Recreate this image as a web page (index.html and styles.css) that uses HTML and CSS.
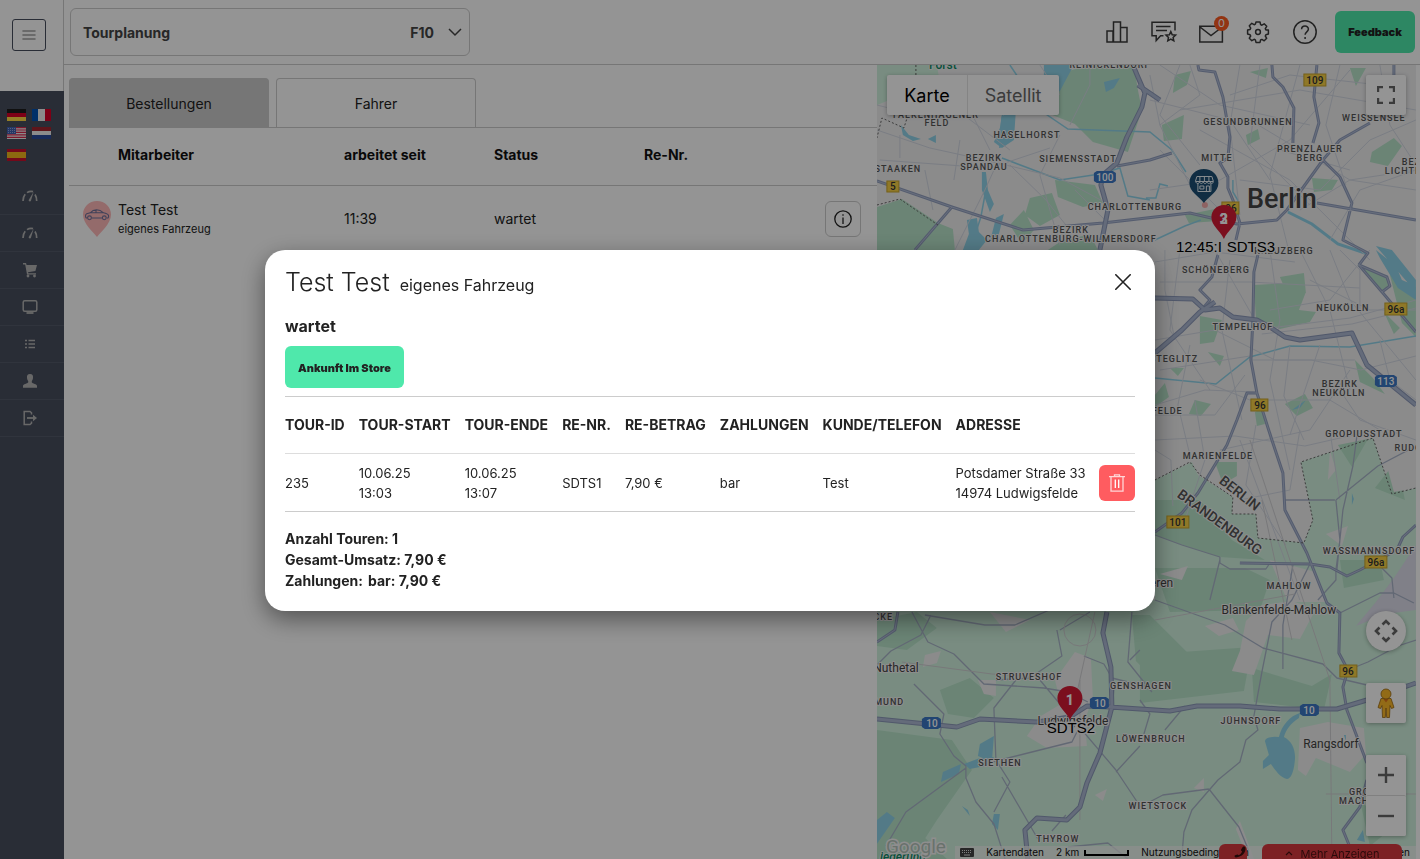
FILE: index.html
```html
<!DOCTYPE html>
<html lang="de">
<head>
<meta charset="utf-8">
<title>Tourplanung</title>
<link rel="stylesheet" href="styles.css">
</head>
<body>
<div class="app">
  <aside class="sidebar">
    <div class="sidebar-top">
      <button class="burger" type="button" aria-label="Menü">
        <svg width="14" height="10" viewBox="0 0 14 10" stroke="#a0a0a0" stroke-width="1.6" stroke-linecap="round"><path d="M1 1h12M1 5h12M1 9h12"/></svg>
      </button>
    </div>
    <div class="flags">
      <svg class="flag" viewBox="0 0 19 12"><path fill="#1d1d1d" d="M0 0h19v4H0z"/><path fill="#d80027" d="M0 4h19v4H0z"/><path fill="#ffda44" d="M0 8h19v4H0z"/></svg>
      <svg class="flag" viewBox="0 0 19 12"><path fill="#0052b4" d="M0 0h7v12H0z"/><path fill="#f0f0f0" d="M6 0h7v12H6z"/><path fill="#d80027" d="M13 0h6v12h-6z"/></svg>
      <svg class="flag" viewBox="0 0 19 12"><path fill="#f0f0f0" d="M0 0h19v12H0z"/><path stroke="#d8274d" stroke-width="1.2" d="M0 .6h19M0 3h19M0 5.4h19M0 7.8h19M0 10.4h19"/><path fill="#3f5fb0" d="M0 0h9v7H0z"/><path stroke="#a9b8e0" stroke-width=".8" stroke-dasharray="1 1" d="M1 1.5h7M1 3.5h7M1 5.5h7"/></svg>
      <svg class="flag" viewBox="0 0 19 12"><path fill="#a2252f" d="M0 0h19v4H0z"/><path fill="#f0f0f0" d="M0 4h19v4H0z"/><path fill="#2a4b9b" d="M0 8h19v4H0z"/></svg>
      <svg class="flag last" viewBox="0 0 19 12"><path fill="#c8102e" d="M0 0h19v12H0z"/><path fill="#f2b61c" d="M0 3h19v6H0z"/></svg>
    </div>
    <nav class="side-nav" aria-label="Hauptmenü">
      <a href="#" aria-label="Dashboard"><svg viewBox="0 0 16 16" fill="none" stroke="currentColor"><path stroke-width="1.7" d="M1 13c0-3 .8-5.200 2.200-6.800M5 4.600C7 3.300 9 3 11 3.600M13 6.500c1 1.500 1.700 3.500 1.700 6.500"/><path fill="currentColor" stroke="none" d="M11.800 3.500 9 12.600c-.5 1.400-2.600.9-2.300-.6z"/></svg></a>
      <a href="#" aria-label="Statistik"><svg viewBox="0 0 16 16" fill="none" stroke="currentColor"><path stroke-width="1.700" d="M1 13c0-3 .8-5.200 2.200-6.800M5 4.600C7 3.300 9 3 11 3.600M13 6.500c1 1.500 1.700 3.500 1.700 6.500"/><path fill="currentColor" stroke="none" d="M11.800 3.500 9 12.600c-.5 1.400-2.600.9-2.300-.6z"/></svg></a>
      <a href="#" aria-label="Bestellungen"><svg viewBox="0 0 16 16" fill="currentColor"><path d="M1 1h3l.6 2H15l-1.600 6-7.400 1.200.3 1H14v1.300H5L3.200 2.400H1z"/><circle cx="6" cy="14" r="1.400"/><circle cx="12.500" cy="14" r="1.400"/></svg></a>
      <a href="#" aria-label="Kasse"><svg viewBox="0 0 16 16" fill="none" stroke="currentColor" stroke-width="1.500"><rect x="1.200" y="1.800" width="13.600" height="10.500" rx="1.500"/><path stroke-width="1.800" d="M4.500 14h7"/></svg></a>
      <a href="#" aria-label="Listen"><svg viewBox="0 0 16 16" stroke="currentColor" stroke-width="1.500"><path d="M3 4.500h2M3 8h2M3 11.500h2M6.500 4.500H13M6.500 8H13M6.500 11.500H13"/></svg></a>
      <a href="#" aria-label="Kunden"><svg viewBox="0 0 16 16" fill="currentColor"><path d="M8 1c2.400 0 3.300 1.700 3 3.900-.2 1.700-.8 2.400-1.200 3.100v1.500c.7 1 5.200 1.600 5.200 3.500v1.800H1V13c0-1.900 4.500-2.500 5.200-3.500V8C5.800 7.300 5.200 6.600 5 4.900 4.700 2.700 5.600 1 8 1z"/></svg></a>
      <a href="#" aria-label="Abmelden"><svg viewBox="0 0 16 16" fill="none" stroke="currentColor" stroke-width="1.500"><path d="M9.500 4.500V2.800L8 1.500H2.200v13H8l1.500-1.300v-1.700"/><path stroke-width="1.800" d="M5 8h7"/><path fill="currentColor" stroke="none" d="M11 4.800 15 8l-4 3.200z"/></svg></a>
    </nav>
  </aside>

  <div class="page">
    <header class="topbar">
      <button class="module-select" type="button">
        <span>Tourplanung</span>
        <span class="shortcut">F10
          <svg width="14" height="9" viewBox="0 0 14 9" fill="none" stroke="currentColor" stroke-width="1.500"><path d="M1 1l6 6 6-6"/></svg>
        </span>
      </button>
      <div class="actions">
        <button class="icon-btn" type="button" aria-label="Auswertung"><svg viewBox="0 0 24 24"><path d="M2 11h6v11H2zM8.500 2h7v20h-7zM15.500 7.500H22V22h-6.500z"/></svg></button>
        <button class="icon-btn" type="button" aria-label="Bewertungen"><svg viewBox="0 0 24 24"><path d="M23 10.500V2.300H0v13.500h4.200V20.500l4.400-4.700h2.900M4 6.500h14.500M4 10.500h11"/><path d="m18.800 11.500 1.400 3.200 3.400.4-2.500 2.300.7 3.400-3-1.700-3 1.700.7-3.400-2.500-2.300 3.400-.4z"/></svg></button>
        <button class="icon-btn" type="button" aria-label="Nachrichten"><svg viewBox="0 0 24 24"><path d="M.8 6.200h22.600V22H.8zM1 7l11 8.500L23.200 7"/></svg><span class="badge">0</span></button>
        <button class="icon-btn" type="button" aria-label="Einstellungen"><svg viewBox="0 0 24 24"><path d="M10 2h4l.6 2.600 1.300.6 2.300-1.400 2.500 2.500-1.400 2.300.6 1.300L22.400 10v4l-2.500.7-.6 1.300 1.400 2.300-2.500 2.500-2.300-1.400-1.300.6L14 22.400h-4l-.6-2.500-1.300-.6-2.300 1.400-2.500-2.500L4.700 16l-.6-1.300-2.500-.7v-4l2.500-.6.600-1.300-1.400-2.300 2.500-2.500 2.300 1.400 1.300-.6z" stroke-linejoin="round"/><circle cx="12" cy="12" r="2.400"/></svg></button>
        <button class="icon-btn" type="button" aria-label="Hilfe"><svg viewBox="0 0 24 24"><circle cx="12" cy="12" r="11.200"/><path d="M8.600 9.300c0-4.300 6.800-4.300 6.800-.2 0 2.800-3.300 2.700-3.300 5.700M12.100 17v2"/></svg></button>
        <button class="btn-green" type="button">Feedback</button>
      </div>
    </header>

    <div class="content">
      <main class="drivers">
        <div class="tabs" role="tablist">
          <button class="tab active" role="tab" type="button">Bestellungen</button>
          <button class="tab" role="tab" type="button">Fahrer</button>
        </div>
        <table class="driver-table">
          <thead><tr><th class="c-pin"></th><th class="c-name">Mitarbeiter</th><th class="c-col">arbeitet seit</th><th class="c-col">Status</th><th class="c-rest" colspan="2">Re-Nr.</th></tr></thead>
          <tbody><tr>
            <td class="c-pin"><svg width="28" height="38" viewBox="0 0 28 38"><path fill="#ffb9b9" d="M14 1C6 1 0 7 0 14.500 0 24 10.500 32 14 37 17.500 32 28 24 28 14.500 28 7 22 1 14 1z"/><g fill="none" stroke="#6f7099" stroke-width="1.100"><path d="M4.300 18H3.200c-1-.8-1-3.700.5-4.300l3.500-.9c2-2.200 3.500-3 6.300-3s4.600.7 7 3c2.500.4 4.500 1.300 5 2.700.3 1 .3 1.800-.5 2.500h-1.200M8.500 18h11M7.500 12.800h13M13 10v3"/><circle cx="6.500" cy="17.800" r="1.900"/><circle cx="21.300" cy="17.800" r="1.900"/></g></svg></td>
            <td><div>Test Test</div><small>eigenes Fahrzeug</small></td>
            <td>11:39</td><td>wartet</td><td></td>
            <td class="c-action"><button class="info-btn" type="button" aria-label="Details"><svg width="18" height="18" viewBox="0 0 18 18" fill="none" stroke="currentColor" stroke-width="1.300"><circle cx="9" cy="9" r="8.200"/><path d="M9 7.500V14M9 4.300v1.500"/></svg></button></td>
          </tr></tbody>
        </table>
      </main>

      <section class="map" aria-label="Karte">
        <svg class="map-canvas" viewBox="877 65 539 794" preserveAspectRatio="xMidYMid slice">
          <rect x="877" y="65" width="539" height="794" fill="#efeff0"/>
          <!-- rural land -->
          <g fill="#d0f2de">
            <path d="M1155 480 1192 462 1198 475 1233 497 1232 514 1256 514 1258 538 1304 543 1313 520 1301 462 1373 438 1392 494 1416 488V859H877V600h278z"/>
            <path d="M877 65h60l5 30-20 12-30-8-15 6z"/>
          </g>
          <!-- forest and parks -->
          <g fill="#b8e4ca">
            <path d="M877 207 902 199 938 223 953 229 955 250H877z"/>
            <path d="M1090 65h44l4 25 4 20-14 42-35-10-18-18-30-12 20-40z"/>
            <path d="M1030 198 1052 193 1060 215 1040 226 1025 215zM1010 225l14-15 10 20-12 14zM1055 180l40 5 8 18-20 4-25-10z"/>
            <path d="M1060 242l30-8 8 16h-50z"/>
            <path d="M1254 285 1290 283 1306 292 1299 310 1316 312 1310 322 1280 329 1256 318zM1200 316l22 4-8 22-14 2zM1280 277l24-4 2 20-20-2z"/>
            <path d="M1162 125l22-10-2 24-18 2zM1246 135l12-6 2 10-12 6zM1372 152l22-14 8 8-14 20-18-4zM1312 178l26 2-6 10-18 2zM1185 215l30-6 4 12-30 2z"/>
            <path d="M1358 265 1387 277 1390 286 1382 292zM1390 275l26 12v50l-14-14zM1355 360l18 18 12 16-25-12zM1175 75l16-4-4 14-14 8zM1250 72l18-4-2 10zM1350 68l16 0-10 18z"/>
            <path d="M1155 395l10-12 4 14-14 10zM1285 404l20-10 8 14-16 8zM1195 400l16 4-10 12-12-2zM1255 412l8-4 2 16-8 2zM1215 462l22 0 0 14-14 8zM1170 368l14 0-6 8zM1208 352l16 4-4 10zM1384 312l16 16-6 6z"/>
            <path d="M1155 500 1200 500 1232 540 1265 560 1220 557 1182 545 1155 535zM1155 568l90 0 25 12-10 30-90 2zM1140 655l112-8-8 44-104 12zM1252 668l60 18 20-12-8 36-70-8z"/>
            <path d="M877 730l75 10 20 30-35 50-25 39h-35zM1132 615l18 0 40 40-30 30-24-24zM1338 445l30-6-16 28zM1340 560l40 0 4 20-40 8z"/>
            <path d="M877 620l40-8 20 16-30 22-30-4zM940 690l30-12 24 20-20 20-26-4zM1375 488l22-28 8 40zM1360 800l30 30-20 16zM877 820l40 10 30 29h-70z"/>
          </g>
          <!-- built-up places -->
          <g fill="#efeff0">
            <path d="M1055 680l20-28 16 6 2 40-8 22 2 26-40 2-20-12 14-20 20-12zM1300 728l28-6 36 6 2 26-16 18-34-14-10 18-8-6zM1262 605l30-4 24 8-16 30-32-4-14 40-22-4 8-20 6-30z"/>
            <path d="M990 612l40 8-24 12zM1205 626l28-8 6 12-20 6zM925 655l16-4-4 12-14 4zM978 680l18 0 0 16-12-2zM1270 560l46 12 12 30-40 0zM1194 788l10-10 0 14zM1240 821l6 16 8 22-6 0-12-30zM1095 795l12-6-4 12zM1160 574l28-8-6 14z"/>
            <path d="M1380 440l36 8v40l-22 4zM1330 450l6 20-8 10zM1326 534l22-8-6 20z"/>
          </g>
          <path fill="#dcdcea" d="M1416 545v65l-30 4-30 12 20-24 18-24z"/>
          <!-- water -->
          <g fill="#90d3e8">
            <path d="M1044 65h30l-14 26-12 8-4-18zM1002 116l14-6-2 30-12 8-8-6 6-14zM1104 82l16-4-6 10-8 4zM967 220l10-2 2 14 8 8-8 10h-16l6-16zM996 218l8-4-6 24-8 4zM982 172l4 0 2 18 6 14-4 8-8-22z"/>
            <path d="M901 125l8 10 12 4-8 2-10-6zM928 139l8-4 0 8zM980 744l14-8-2 26-14-6zM964 764l16-6 14-1-4 8-20 4zM943 772l18-8-2 10-18 8zM877 820l10-8 8 6-18 26zM962 806l6 4 2 6zM994 814l6 0-2 16-6-6z"/>
            <path d="M1279 737C1282 725 1290 716 1300 713L1299 718C1290 724 1286 730 1284 737C1292 741 1296 750 1295 760C1294 772 1291 779 1287 779C1281 778 1275 770 1271 764L1263 769L1263 761L1269 755L1265 741Q1266 736 1279 737z"/>
            <path d="M1376 250l20 16 6 14 14 6v14l-18-12-18-30zM1376 246l16 4 24 30v12zM1292 410l14-10-6 8zM1344 735l2 0 0 6zM1357 840l6-10 2 12zM1352 493l2 6-2 6z"/>
          </g>
          <g fill="none" stroke="#90d3e8" stroke-width="1.500">
            <path d="M1010 65 1040 110 1068 129 1150 132 1172 150 1186 172M1002 158 1060 180 1100 174 1120 168 1128 196 1150 200M1146 198l10 0 4-14 8 2M985 195l-4 22-20 60M1006 100l-4 18-2 30"/>
            <path stroke-width="3" d="M1288 212l24 12 26 20 30 10"/>
            <path d="M1155 378 1216 384 1250 357 1290 346 1350 347 1416 336M1233 180l0 12 6 10M1155 240l30-14 16-6"/>
          </g>
          <!-- minor streets -->
          <g class="street">
            <path d="M877 130 930 148 985 160 1060 178 1110 205M877 105 905 112 960 112 1010 150M900 135 900 158M880 160l110 8 60-20M955 250l30-60 10-22M925 170l8 40M960 140l-6 40M1010 165l36 35 24 30M1060 135l-20 40 20 70M1090 65l0 20-20 40M960 90l30 60M1040 65l20 30M1075 190l30 30"/>
            <path d="M1150 75l10 50 30 60M1160 65l60 40 90 20M1180 65l-20 50 40 50M1240 65l-10 60 10 90M1250 120l100 60 66 10M1260 65l-10 80 60 60M1300 65l-30 110 20 80M1180 110l120-20 116 20M1340 65l-14 60 20 60M1380 65l10 60 26 40M1230 95l60-20 90 10M1150 100l80 20 40 60M1150 190l70-10 70-40 60-70M1200 130l90 50 80 80M1160 150l60 60M1240 180l80 10 50-50 46-20M1300 210l50-30 66-10M1330 240l30-50 56-20M1280 150l70 20M1190 65l10 30-40 30"/>
            <path d="M1155 262l60-10 80 10M1160 282l90 0 110 6M1165 250l0 40 10 50M1180 250l-10 80 40 60M1230 260l-8 70 20 90M1270 250l10 70-10 60 20 90M1300 250l30 60 20 80M1330 250l20 50 66 80M1270 328 1350 318 1416 300M1262 334l90-10 64-16M1155 340l60-10 60 30 80 0M1251 360l60 0 50 10 55-14M1160 370l90-14M1200 380l50 20 80 0 50 30M1155 405l50-15 50 2M1290 346l-6 50 20 44M1320 345l-30 90M1350 370l-40 60-90 20M1340 250l20 20 0 40M1370 250l-40 50-60 10M1215 250l40 70M1155 415l60 0 30-40M1310 280l60 30 46 0M1190 345l-12 60 12 50M1340 390l20 30 56 20M1380 340l10 40 26 20"/>
            <path d="M1155 440l80-4 70 10 70-16M1195 400l10 60-20 60M1256 425l-10 60 40 60M1300 430l-10 60-50 10M1330 430l10 70M1240 440l60 160M1155 450l16 10 2 46"/>
          </g>
          <g class="lane">
            <path d="M1220 557 1182 545 1155 535M1220 557l0 6 10 6 36 0 4-6M1220 560l-10 40M1310 564l-18 36-20 22-10 50-8 44 4 14-12 10-6 22-22 18-26 30-8 22-2 24M1337 570l6-60 10-44 4-30M1336 500l42-34 38-20M1336 500l4 40-4 30 0 10-18 20M1285 500l50 0M1293 565l-10 60 0 44M1155 600l70 25 38 23 60 16 14 14 60 14M1340 613l40-20 14 0 20 10M1348 670l20-8 30-16 18-6M1209 789l-46 6-23 12M1209 789l30 38 10 24M1380 566l12 12 2 20"/>
            <path d="M912 612l16 30 26 12 30 30 60 4 24 4 20 10M877 665l14-14 30-16 10-20M925 615l60 10 30 0 46-20M1057 630l5 26-32 22-34 2M1060 630l30-18M1016 680l-22 28 2 52 14 22-16 30M1002 777l36 62M914 684l30 30-4 20 14 22 12 10 0 12 10 24 18 22 14 44M966 768l-60 44-20 34M992 762l40-10 40-10 8-16M1040 680l20 24 56 66 24 36M1132 612l-4 50 24 30M1116 772l24-26M1066 815l-14 16M1068 847l40-4 20 16M1110 660l4 30-2 20M1084 656l20 8 8 14 40 10M1140 700l10 14-6 20M1130 660l10-10M1165 730l20-24"/>
          </g>
          <g class="rail"><path d="M902 662l90 12 60 4M1080 680l0 140M1095 612l-20 90M1155 620l140-26M1262 500l30 140M1250 440l80 240 2 179M1416 794l-90 0"/><circle cx="1080" cy="630" r="16"/></g>
          <!-- main roads -->
          <g class="road">
            <path id="roads" d="M877 181 952 207 1023 230 1103 223 1190 213 1237 224 1277 220 1287 210 1323 160 1340 140 1370 123M952 207 915 250M1117 166 1150 160 1172 153M1198 65 1199 70 1215 72 1223 97 1230 137 1228 158 1220 163 1228 177 1228 188 1233 200 1240 223 1236 240M1272 65 1273 77 1283 87 1294 108 1293 143M1317 65 1314 97 1319 123 1313 143M1323 160 1340 177 1352 203 1343 240 1368 253 1359 265M1317 203 1416 220M1394 65v20M1258 255 1254 272 1253 320 1251 360 1257 393 1272 440 1283 473 1285 510 1307 553 1327 603 1340 613 1339 653 1348 670 1343 687 1347 710 1367 763M1367 780 1360 807 1343 830 1350 847M1257 393 1247 393 1237 420 1227 445 1198 493 1182 513 1155 532M1218 255 1212 277 1200 290 1210 300 1200 312M1359 265 1387 277 1390 286 1382 292M1359 265 1383 293 1416 332M1240 563 1310 564 1330 567 1347 576 1360 570 1397 550 1403 537 1416 525M898 612 895 630 877 642"/>
          </g>
          <use href="#roads" class="road-core"/>
          <g class="motorway">
            <path id="motorways" d="M1133 65 1138 77 1145 93 1142 107 1127 137 1117 163 1103 175 1101 185 1108 210 1100 250M1138 85 1160 100M1155 298 1193 299 1205 310 1220 308 1233 317 1257 320 1270 327 1285 337 1300 340 1352 333 1367 365 1416 405M1155 353 1182 330 1200 312 1215 302M877 719 957 727 980 719 1037 722 1070 717 1087 706 1110 707 1170 711 1197 706 1240 706 1280 709 1337 709 1367 700 1416 683M1107 612 1103 633 1111 667 1112 707 1100 753 1087 783 1080 807 1067 820 1037 818 1025 830 1028 859"/>
          </g>
          <use href="#motorways" class="motorway-core"/>
          <path class="border" d="M916 65v25l-12 38-22-10-5 20M877 205 900 199 938 225M1155 480 1190 462 1200 475 1233 497 1232 514 1256 514 1258 538 1304 543 1313 520 1301 462 1373 438 1392 494 1416 488"/>
          <g fill="#f4a9a9"><circle cx="1205" cy="205" r="3"/></g>

          <!-- road shields -->
          <g class="shield-yellow">
            <rect x="887" y="181" width="12" height="11"/><rect x="1304" y="74" width="22" height="12"/><rect x="1222" y="202" width="17" height="12"/><rect x="1385" y="303" width="22" height="12"/><rect x="1251" y="399" width="17" height="12"/><rect x="1167" y="516" width="22" height="12"/><rect x="1365" y="556" width="22" height="12"/><rect x="1340" y="665" width="17" height="12"/>
          </g>
          <g class="shield-blue">
            <path d="M1097 171h16l3 2v8l-3 2h-16l-3-2v-8z"/><path d="M1378 375h16l3 2v8l-3 2h-16l-3-2v-8z"/><path d="M925 717h13l3 2v8l-3 2h-13l-3-2v-8z"/><path d="M1093 697h13l3 2v8l-3 2h-13l-3-2v-8z"/><path d="M1303 704h13l3 2v8l-3 2h-13l-3-2v-8z"/>
          </g>
          <g class="shield-text">
            <text x="893" y="190">5</text><text x="1315" y="84">109</text><text x="1231" y="212">96</text><text x="1396" y="313">96a</text><text x="1260" y="409">96</text><text x="1178" y="526">101</text><text x="1376" y="566">96a</text><text x="1348" y="675">96</text>
          </g>
          <g class="shield-text light">
            <text x="1105" y="181">100</text><text x="1386" y="385">113</text><text x="932" y="727">10</text><text x="1100" y="707">10</text><text x="1309" y="714">10</text>
          </g>

          <!-- districts -->
          <g class="district">
            <text x="936" y="118">FALKENHAGENER</text><text x="937" y="126">FELD</text><text x="1027" y="138">HASELHORST</text>
            <text x="984" y="161">BEZIRK</text><text x="984" y="170">SPANDAU</text><text x="1078" y="162">SIEMENSSTADT</text>
            <text x="898" y="172">STAAKEN</text><text x="1135" y="210">CHARLOTTENBURG</text><text x="1071" y="233">BEZIRK</text><text x="1071" y="242">CHARLOTTENBURG-WILMERSDORF</text>
            <text x="1110" y="68">REINICKENDORF</text>
            <text x="1248" y="125">GESUNDBRUNNEN</text><text x="1374" y="121">WEISSENSEE</text><text x="1310" y="152">PRENZLAUER</text><text x="1310" y="161">BERG</text><text x="1217" y="161">MITTE</text>
            <text x="1420" y="165">BEZIRK</text><text x="1420" y="174">LICHTENBERG</text><text x="1284" y="254">KREUZBERG</text><text x="1216" y="273">SCHÖNEBERG</text>
            <text x="1343" y="311">NEUKÖLLN</text><text x="1243" y="330">TEMPELHOF</text><text x="1174" y="362">STEGLITZ</text><text x="1340" y="387">BEZIRK</text><text x="1339" y="396">NEUKÖLLN</text>
            <text x="1364" y="437">GROPIUSSTADT</text><text x="1413" y="451">RUDOW</text><text x="1218" y="459">MARIENFELDE</text><text x="1146" y="414">LICHTERFELDE</text>
            <text x="1369" y="554">WASSMANNSDORF</text><text x="1289" y="589">MAHLOW</text><text x="862" y="620">SAARMÜCKE</text><text x="1029" y="680">STRUVESHOF</text><text x="1141" y="689">GENSHAGEN</text>
            <text x="876" y="705">BERGMUND</text><text x="1251" y="724">JÜHNSDORF</text><text x="1151" y="742">LÖWENBRUCH</text><text x="1000" y="766">SIETHEN</text><text x="1158" y="809">WIETSTOCK</text><text x="1058" y="842">THYROW</text>
            <text x="1366" y="795">GROSS</text><text x="1366" y="804">MACHNOW</text>
          </g>
          <g class="state"><text transform="translate(1237 497) rotate(38)">BERLIN</text><text transform="translate(1217 526) rotate(36)">BRANDENBURG</text></g>
          <g class="town"><text x="1279" y="614">Blankenfelde-Mahlow</text><text x="1142" y="587">Großbeeren</text><text x="896" y="672">Nuthetal</text><text x="1073" y="725">Ludwigsfelde</text><text x="1331" y="748">Rangsdorf</text></g>
          <text class="city" x="1282" y="208">Berlin</text>
          <g class="nature"><text x="943" y="69">Forst</text><text x="903" y="861" font-style="italic">iederung</text></g>

          <!-- markers -->
          <path fill="#1c4f74" d="M1204 169c-8 0-14.500 6-14.500 14 0 9 9.500 13 14.500 20 5-7 14.500-11 14.500-20 0-8-6.500-14-14.500-14z"/>
          <path fill="none" stroke="#e6eef4" d="M1197 176.500h15l1.500 5h-18zM1198 183v8.500h13V183M1196 182c.6 2 3 2 3.600 0 .8 2 3 2 3.700 0 .8 2 3 2 3.700 0 .8 2 3 2 3.700 0 .6 2 2 2 2.600 0M1200 186h4v3h-4zM1206.500 191.500V186h3v5.500M1200 177v4M1204.500 177v4M1209 177v4"/>
          <path fill="#d41a35" d="M1224 205c-7 0-12.500 5-12.500 12 0 9 8.500 13 12.500 22 4-9 12.500-13 12.500-22 0-7-5.500-12-12.500-12z"/>
          <g class="pin-label"><text x="1199" y="252">12:45:I</text><text x="1251" y="252">SDTS3</text><text x="1071" y="733">SDTS2</text></g>
          <path fill="#d41a35" d="M1070 686c-7 0-12.500 5-12.500 12 0 9 8.500 13 12.500 22 4-9 12.500-13 12.500-22 0-7-5.500-12-12.500-12z"/>
          <g class="pin-number"><text x="1224" y="224">2</text><text x="1224" y="224">3</text><text x="1070" y="705">1</text></g>
          <text class="google" x="886" y="853">Google</text>
        </svg>

        <div class="map-type">
          <button type="button" class="selected">Karte</button><button type="button">Satellit</button>
        </div>
        <button class="map-btn fullscreen" type="button" aria-label="Vollbild"><svg width="18" height="18" viewBox="0 0 18 18" fill="none" stroke="#666" stroke-width="2.200"><path d="M1.100 6V1.100H6M12 1.100h4.900V6M16.900 12v4.900H12M6 16.900H1.100V12"/></svg></button>
        <div class="map-controls">
          <button class="map-btn round" type="button" aria-label="Kamerasteuerung"><svg width="24" height="24" viewBox="0 0 24 24" fill="none" stroke="#666" stroke-width="2.600"><path d="m8.500 5.500 3.500-3.500 3.500 3.500M8.500 18.500l3.500 3.500 3.500-3.500M5.500 8.500 2 12l3.500 3.500M18.500 8.500 22 12l-3.500 3.500"/></svg></button>
          <button class="map-btn" type="button" aria-label="Street View"><svg width="18" height="30" viewBox="0 0 18 30" fill="#fbb829" stroke="#9a6a14" stroke-width=".8"><path d="M4 10.500h10l3 9-2.500 1-1.500-3-.5 12H9.700L9 20l-.7 9.500H5.500L5 17.500l-1.500 3-2.500-1z"/><path fill="#e0761c" stroke="none" d="M6 10.500h6l-3 4z"/><circle cx="9" cy="6" r="5"/></svg></button>
          <div class="zoom">
            <button class="map-btn" type="button" aria-label="Vergrößern"><svg width="16" height="16" viewBox="0 0 16 16" stroke="#666" stroke-width="2.400"><path d="M0 8h16M8 0v16"/></svg></button>
            <button class="map-btn" type="button" aria-label="Verkleinern"><svg width="16" height="16" viewBox="0 0 16 16" stroke="#666" stroke-width="2.400"><path d="M0 8h16"/></svg></button>
          </div>
        </div>
        <div class="map-legal">
          <svg width="14" height="9" viewBox="0 0 14 9"><rect width="14" height="9" rx="1" fill="#444"/><path stroke="#ddd" stroke-dasharray="1 1" d="M2 2.500h10M2 4.500h10"/><path stroke="#ddd" d="M4 7h6"/></svg>
          <span>Kartendaten</span>
          <span class="scale">2 km <i></i></span>
          <span>Nutzungsbedingungen</span>
          <span class="legal-last">Problem melden</span>
        </div>
      </section>
    </div>
  </div>
</div>

<div class="dock">
  <button class="dock-btn phone" type="button" aria-label="Anrufe"><svg width="12" height="12" viewBox="0 0 12 12"><path fill="#3a1010" d="M11.500 1.800c.5 4.600-3.400 9.300-9.500 9.600-1 0-1.700-.8-1.500-1.600C.6 9.300 3 8.300 3.700 8.500l1 .8C6.600 8.400 7.700 7 8 5.300l-1-.8C6.800 4 8.500.7 9.300.5c1-.2 2 .3 2.200 1.300z"/></svg></button>
  <button class="dock-btn more" type="button"><svg width="8" height="5" viewBox="0 0 8 5" fill="none" stroke="currentColor" stroke-width="1.200"><path d="M1 4l3-3 3 3"/></svg>Mehr Anzeigen</button>
</div>

<div class="backdrop">
  <section class="modal" role="dialog" aria-modal="true" aria-labelledby="modal-title">
    <header class="modal-head">
      <h1 id="modal-title">Test Test</h1>
      <span class="vehicle">eigenes Fahrzeug</span>
      <button class="close" type="button" aria-label="Schließen"><svg width="16" height="16" viewBox="0 0 16 16" stroke="currentColor" stroke-width="1.600" stroke-linecap="round"><path d="M.8.800l14.400 14.400M15.200.800.8 15.200"/></svg></button>
    </header>
    <h2 class="state-title">wartet</h2>
    <button class="btn-green arrive" type="button">Ankunft Im Store</button>
    <table class="tours">
      <thead><tr><th>TOUR-ID</th><th>TOUR-START</th><th>TOUR-ENDE</th><th>RE-NR.</th><th>RE-BETRAG</th><th>ZAHLUNGEN</th><th>KUNDE/TELEFON</th><th>ADRESSE</th><th></th></tr></thead>
      <tbody><tr>
        <td>235</td><td>10.06.25<br>13:03</td><td>10.06.25<br>13:07</td><td>SDTS1</td><td>7,90 €</td><td>bar</td><td>Test</td><td class="address">Potsdamer Straße 33<br>14974 Ludwigsfelde</td>
        <td><button class="delete" type="button" aria-label="Tour löschen"><svg width="16" height="18" viewBox="0 0 16 18" fill="none" stroke="#fff" stroke-width="1.300"><path opacity=".75" d="M0 2.700h16M5.500 2.500V.800h5v1.700M2 3v14.200h12V3"/><path d="M6.300 5.500v8.500M9.700 5.500v8.500"/></svg></button></td>
      </tr></tbody>
    </table>
    <div class="totals">
      <div>Anzahl Touren: 1</div>
      <div>Gesamt-Umsatz: 7,90 €</div>
      <div class="payments"><span>Zahlungen:</span><span>bar: 7,90 €</span></div>
    </div>
  </section>
</div>
</body>
</html>
```

FILE: styles.css
```css
* { box-sizing: border-box; }

body {
  margin: 0;
  font: 14px/20px Inter, "Liberation Sans", sans-serif;
  color: #222;
  overflow: hidden;
}

button {
  font: inherit;
  color: inherit;
  padding: 0;
  border: 0;
  background: none;
  cursor: pointer;
}

svg { display: block; }

.app {
  display: flex;
  height: 100vh;
  background: #fff;
}

/* Sidebar */
.sidebar {
  width: 64px;
  flex: none;
  display: flex;
  flex-direction: column;
  background: #474e5e;
}

.sidebar-top {
  height: 91px;
  padding: 19px 12px;
  background: #fff;
  border-right: 1px solid #ccc;
}

.burger {
  width: 34px;
  height: 32px;
  display: grid;
  place-items: center;
  border: 1px solid #474e5e;
  border-radius: 3px;
}

.flags {
  display: grid;
  grid-template-columns: 19px 19px;
  gap: 6px;
  padding: 18px 7px 17px;
}

.flag {
  width: 19px;
  height: 12px;
}

.flag.last { margin-top: 4px; }

.side-nav a {
  height: 37px;
  display: grid;
  place-items: center;
  padding-right: 5px;
  color: #b4b4b4;
  border-bottom: 1px solid #535a69;
}

.side-nav svg {
  width: 16px;
  height: 16px;
}

/* Top bar */
.page {
  flex: 1;
  min-width: 0;
  display: flex;
  flex-direction: column;
}

.topbar {
  display: flex;
  justify-content: space-between;
  align-items: center;
  height: 65px;
  padding: 0 5px 1px 6px;
  border-bottom: 1px solid #ccc;
}

.module-select {
  width: 400px;
  height: 48px;
  padding: 2px 7px 0 12px;
  display: flex;
  align-items: center;
  justify-content: space-between;
  border: 1px solid #ccc;
  border-radius: 6px;
  font-weight: 700;
  color: #444;
}

.shortcut {
  display: flex;
  align-items: center;
  gap: 14px;
}

.actions {
  display: flex;
  align-items: center;
  gap: 23px;
}

.icon-btn {
  position: relative;
  width: 24px;
  height: 24px;
}

.icon-btn svg {
  width: 24px;
  height: 24px;
  overflow: visible;
  fill: none;
  stroke: #3c3c3c;
  stroke-width: 1.5;
}

.badge {
  position: absolute;
  top: -4px;
  right: -6px;
  width: 15px;
  height: 15px;
  border-radius: 50%;
  background: #fb5a1f;
  color: #fff;
  font-size: 11px;
  line-height: 15px;
  text-align: center;
}

.btn-green {
  height: 42px;
  padding: 1px 13px 0;
  border-radius: 6px;
  background: #4fe8ab;
  font-size: 11px;
  font-weight: 900;
  color: #222;
}

.actions .btn-green {
  width: 80px;
  padding: 0;
  margin-left: -5px;
}

/* Driver list */
.content {
  flex: 1;
  min-height: 0;
  display: flex;
}

.drivers {
  flex: 3;
  padding: 13px 0 0 5px;
}

.tabs {
  display: flex;
  gap: 7px;
  border-bottom: 1px solid #ccc;
}

.tab {
  width: 200px;
  height: 49px;
  padding-top: 2px;
  border: 1px solid #ccc;
  border-bottom: 0;
  border-radius: 4px 4px 0 0;
}

.tab.active { background: #ccc; }

.driver-table {
  width: 100%;
  border-collapse: collapse;
  table-layout: fixed;
  text-align: left;
}

.driver-table th {
  height: 57px;
  padding: 0 0 2px;
  font-weight: 700;
  color: #111;
  border-bottom: 1px solid #ccc;
}

.driver-table td {
  height: 68px;
  padding: 0;
}

.driver-table small {
  display: block;
  font-size: 11px;
  line-height: 18px;
}

.c-pin { width: 49px; }
.driver-table td.c-pin { padding-left: 14px; }
.c-name { width: 226px; }
.c-col { width: 150px; }

.c-action { text-align: right; }
.driver-table td.c-action { padding-right: 16px; }

.info-btn {
  width: 36px;
  height: 36px;
  display: inline-grid;
  place-items: center;
  vertical-align: middle;
  border: 1px solid #ccc;
  border-radius: 6px;
}

/* Map */
.map {
  flex: 2;
  position: relative;
  margin-right: 4px;
  overflow: hidden;
}

.map-canvas {
  position: absolute;
  inset: 0;
  width: 100%;
  height: 100%;
}

.map-canvas text { font-family: Roboto, "Liberation Sans", sans-serif; }

.street, .lane, .rail, .road, .motorway, .road-core, .motorway-core, .border { fill: none; stroke-linejoin: round; }
.street { stroke: #d3d8e2; stroke-width: 1; }
.lane { stroke: #a9b4c8; stroke-width: 1.3; }
.rail { stroke: #cfcfd2; stroke-width: 1; }
.border { stroke: #666; stroke-width: 1; stroke-dasharray: 2 2; }

/* the outer stroke shows as an outline around the paler centre stroke */
#roads, #motorways { stroke: inherit; }
.road { stroke: #93a0bf; stroke-width: 3; }
.road-core { stroke: #b4bfd8; stroke-width: 1; }
.road #roads { stroke-width: inherit; }
.motorway { stroke: #8b98b8; stroke-width: 5; }
.motorway-core { stroke: #acb8d2; stroke-width: 3; }

.shield-yellow rect { fill: #f6cf45; stroke: #c9a52c; }
.shield-blue path { fill: #3b78c4; }

.shield-text {
  font-size: 10px;
  font-weight: 500;
  text-anchor: middle;
  fill: #333;
}

.shield-text.light { fill: #fff; }

.district, .state, .town, .city, .nature, .pin-label {
  text-anchor: middle;
  paint-order: stroke;
  stroke: #f2f2f2;
  stroke-width: 2px;
  stroke-linejoin: round;
  fill: #555;
}

.district {
  font-size: 9px;
  font-weight: 500;
  letter-spacing: 1px;
}

.state { font-size: 14px; font-weight: 500; }
.town { font-size: 12px; fill: #444; }
.city { font-size: 27px; font-weight: 500; fill: #444; }
.nature { font-size: 12px; font-weight: 500; fill: #0f8a66; }

.pin-number {
  font-size: 14px;
  font-weight: 800;
  text-anchor: middle;
  fill: #fff;
}

.map-canvas .pin-label text { font: 15px "Liberation Sans", sans-serif; }
.pin-label { fill: #000; stroke-width: 3px; }

.google {
  font-size: 19px;
  font-weight: 400;
  fill: #b4c4bb;
  stroke: #f4f4f4;
  stroke-width: 3px;
  paint-order: stroke;
}

.map-type {
  position: absolute;
  top: 10px;
  left: 10px;
  height: 40px;
  display: flex;
  background: #fff;
  border-radius: 2px;
  box-shadow: 0 1px 4px rgba(0, 0, 0, .3);
}

.map-type button {
  padding: 2px 17px 0;
  font-size: 18px;
  color: #666;
}

.map-type .selected {
  color: #000;
  border-right: 1px solid #e4e4e4;
}

.map-btn {
  width: 40px;
  height: 40px;
  display: grid;
  place-items: center;
  background: #fff;
  border-radius: 2px;
  box-shadow: 0 1px 4px rgba(0, 0, 0, .3);
}

.fullscreen {
  position: absolute;
  top: 10px;
  right: 10px;
}

.map-controls {
  position: absolute;
  right: 10px;
  bottom: 23px;
  display: flex;
  flex-direction: column;
  gap: 32px;
}

.round { border-radius: 50%; }

.zoom {
  background: #fff;
  border-radius: 2px;
  box-shadow: 0 1px 4px rgba(0, 0, 0, .3);
}

.zoom .map-btn { box-shadow: none; }
.zoom .map-btn + .map-btn { border-top: 1px solid #ddd; height: 41px; }

.map-legal {
  position: absolute;
  right: 0;
  bottom: 0;
  left: 78px;
  height: 13px;
  padding-left: 5px;
  display: flex;
  align-items: center;
  gap: 12px;
  overflow: hidden;
  white-space: nowrap;
  background: rgba(245, 245, 245, .7);
  font-size: 10px;
  line-height: 13px;
  color: #111;
}

.scale {
  display: flex;
  align-items: center;
  gap: 5px;
}

.scale i {
  width: 45px;
  height: 6px;
  border: 2px solid #000;
  border-top: 0;
}

.legal-last { margin-left: auto; padding-right: 6px; }

/* Bottom dock */
.dock {
  position: fixed;
  right: 18px;
  bottom: 0;
  display: flex;
  gap: 15px;
}

.dock-btn {
  height: 15px;
  border-radius: 6px 6px 0 0;
  background: #d83a3f;
  color: #4a1212;
  font-size: 11px;
  display: flex;
  align-items: center;
  justify-content: center;
  gap: 8px;
}

.phone { width: 28px; padding-left: 14px; }
.more { width: 140px; padding-top: 4px; }

/* Dialog */
.backdrop {
  position: fixed;
  inset: 0;
  display: flex;
  align-items: center;
  justify-content: center;
  padding: 2px 20px 0;
  background: rgba(0, 0, 0, .42);
}

.modal {
  width: 890px;
  max-width: 100%;
  padding: 16px 20px 20px;
  background: #fff;
  border-radius: 20px;
  box-shadow: 0 8px 24px rgba(0, 0, 0, .45);
}

.modal-head {
  display: flex;
  align-items: baseline;
  gap: 10px;
  height: 32px;
  line-height: 32px;
}

.modal-head h1 {
  margin: 0;
  font-size: 25px;
  font-weight: 300;
}

.vehicle { font-size: 16px; }

.close {
  align-self: center;
  margin-left: auto;
  padding: 4px;
}

.state-title {
  margin: 16px 0 8px;
  font-size: 16px;
  line-height: 24px;
  font-weight: 700;
}

.arrive { display: block; }

.tours {
  width: 100%;
  margin-top: 8px;
  border-collapse: collapse;
  text-align: left;
  border-top: 1px solid #ccc;
  border-bottom: 1px solid #ccc;
}

.tours th {
  height: 57px;
  padding: 0 14px 0 0;
  font-weight: 700;
  white-space: nowrap;
}

.tours td {
  height: 58px;
  padding: 0 14px 0 0;
  font-size: 13px;
  border-top: 1px solid #ddd;
}

.tours .address { white-space: nowrap; }

.tours th:last-child,
.tours td:last-child {
  width: 36px;
  padding: 0;
}

.delete {
  width: 36px;
  height: 36px;
  display: grid;
  place-items: center;
  border-radius: 6px;
  background: #ff5c60;
}

.totals {
  margin-top: 16px;
  line-height: 21px;
  font-weight: 700;
}

.payments {
  display: flex;
  gap: 5px;
}
```
